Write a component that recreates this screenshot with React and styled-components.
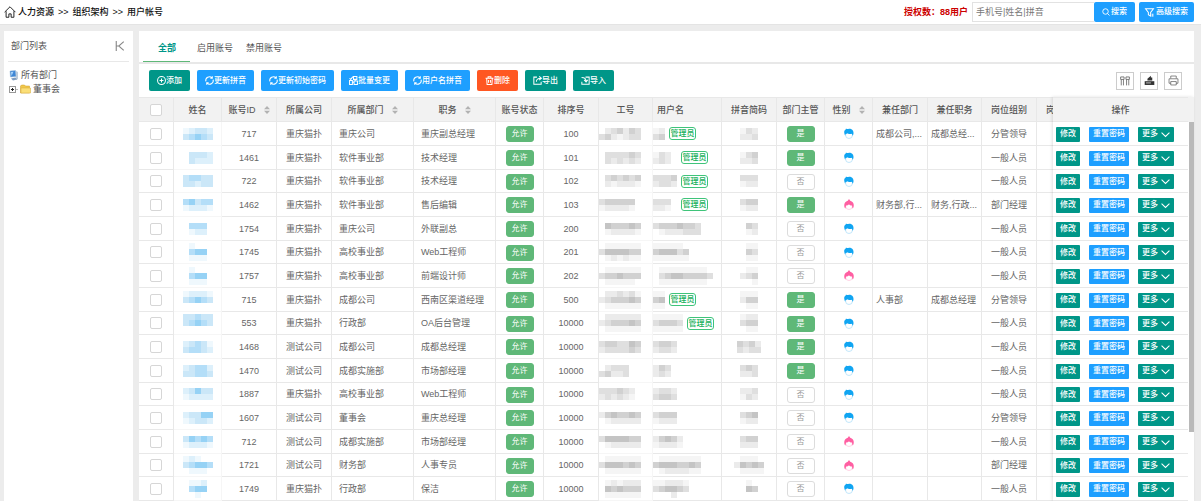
import React from 'react';
import styled, { createGlobalStyle, css } from 'styled-components';

const GlobalStyle = createGlobalStyle`
    * {
        box-sizing: border-box;
    }

    body {
        margin: 0;
        background: #ececec;
        color: #555;
        font-family: 'Liberation Sans', 'Noto Sans CJK SC', sans-serif;
        font-size: 9px;
        line-height: 12px;
    }

    button, input {
        font-family: inherit;
    }
`;

const colors = {
    teal: '#009688',
    blue: '#1e9fff',
    red: '#ff5722',
    green: '#5fb878',
    line: '#e8e8e8',
};

const Page = styled.div`
    display: flex;
    flex-direction: column;
    min-height: 100vh;
    overflow: hidden;
`;

/* ---------- top bar ---------- */

const TopBar = styled.header`
    display: flex;
    align-items: center;
    justify-content: space-between;
    height: 25px;
    padding: 0 7px 0 4px;
    background: #fff;
    border-bottom: 1px solid #e4e4e4;
`;

const Breadcrumb = styled.nav`
    display: flex;
    align-items: center;
    gap: 4px;
    color: #111;
    font-size: 9px;
    font-weight: 500;
`;

const BreadcrumbHome = styled.span`
    display: flex;
    align-items: center;
    gap: 2px;
`;

const SearchForm = styled.form`
    display: flex;
    align-items: center;
`;

const License = styled.strong`
    margin-right: 4px;
    color: #c00;
`;

const SearchInput = styled.input`
    width: 122px;
    height: 20px;
    padding: 0 3px;
    border: 1px solid #e2e2e2;
    border-right: 0;
    border-radius: 0;
    color: #555;
    font-size: 9px;

    &::placeholder {
        color: #777;
    }
`;

const Button = styled.button`
    display: inline-flex;
    align-items: center;
    justify-content: center;
    height: ${props => props.$height || 21}px;
    padding: 0 ${props => (props.$compact ? 4 : 8)}px;
    gap: ${props => props.$gap || 0}px;
    border: 0;
    border-radius: ${props => (props.$compact ? 1 : 2)}px;
    background: ${props => colors[props.$color]};
    color: #fff;
    font-size: 8px;
    font-weight: 500;
    line-height: 12px;
    white-space: nowrap;
    cursor: pointer;
`;

const AdvancedButton = styled(Button)`
    margin-left: 4px;
    padding: 0 6px;
`;

/* ---------- layout ---------- */

const Body = styled.div`
    display: flex;
    flex: 1;
    gap: 6px;
    padding: 6px 7px 0 4px;
`;

const Sidebar = styled.aside`
    flex: none;
    width: 129px;
    padding: 0 4px;
    background: #fff;
`;

const SidebarHead = styled.div`
    display: flex;
    align-items: center;
    justify-content: space-between;
    height: 31px;
    padding: 0 4px 0 3px;
    border-bottom: 1px solid ${colors.line};
`;

const IconButton = styled.button`
    display: flex;
    padding: 0;
    border: 0;
    background: none;
    color: #888;
    cursor: pointer;
`;

const Tree = styled.ul`
    margin: 0;
    padding: 6px 0 0 1px;
    list-style: none;
`;

const TreeItem = styled.li`
    display: flex;
    align-items: center;
    height: 14px;
    gap: 2px;
`;

const Main = styled.main`
    display: flex;
    flex-direction: column;
    flex: 1;
    min-width: 0;
    background: #fff;
`;

const Tabs = styled.div`
    display: flex;
    height: 33px;
    padding-left: 4px;
    border-bottom: 2px solid ${colors.line};
`;

const Tab = styled.button`
    height: 31px;
    padding: 2px 6px 0 7px;
    border: 0;
    background: none;
    color: #555;
    font-size: 9px;
    cursor: pointer;

    ${props => props.$active && css`
        padding: 2px 14px 0 15px;
        border-bottom: 1px solid ${colors.green};
        color: ${colors.teal};
        font-weight: bold;
    `}
`;

const Toolbar = styled.div`
    display: flex;
    align-items: center;
    justify-content: space-between;
    padding: 6px 12px 6px 10px;
`;

const ToolGroup = styled.div`
    display: flex;
    gap: ${props => props.$gap || 6}px;
`;

const ToolButton = styled.button`
    display: flex;
    align-items: center;
    justify-content: center;
    width: 18px;
    height: 18px;
    padding: 0;
    border: 1px solid #ccc;
    background: #fff;
    color: #555;
    cursor: pointer;
`;

/* ---------- table ---------- */

const TableView = styled.div`
    display: flex;
`;

const Scroller = styled.div`
    flex: 1;
    min-width: 0;
    overflow: hidden;
`;

const Table = styled.table`
    width: ${props => props.$width}px;
    min-width: 100%;
    table-layout: fixed;
    border-collapse: separate;
    border-spacing: 0;

    tbody tr:nth-child(3n) td {
        height: 23px;
    }
`;

const Th = styled.th`
    height: 25px;
    padding: 0 ${props => (props.$align === 'left' ? 4 : 0)}px;
    background: #f2f2f2;
    border: solid ${colors.line};
    border-width: 1px 1px 1px 0;
    color: #555;
    font-weight: 500;
    text-align: ${props => props.$align || 'center'};
    white-space: nowrap;
    overflow: hidden;
`;

const Td = styled.td`
    height: 24px;
    padding: 0 ${props => props.$pad || 0}px;
    border: solid ${colors.line};
    border-width: 0 1px 1px 0;
    color: #666;
    text-align: ${props => props.$align || 'center'};
    white-space: nowrap;
    overflow: hidden;
`;

const MaskedTd = styled(Td)`
    border-color: #f6f6f6;
`;

const SortLabel = styled.span`
    display: inline-flex;
    align-items: center;
    gap: 8px;
`;

const Checkbox = styled.input.attrs({ type: 'checkbox' })`
    display: block;
    width: 12px;
    height: 12px;
    margin: 0 auto;
    appearance: none;
    border: 1px solid #d6d6d6;
    border-radius: 2px;
    background: #fff;
`;

const Status = styled.button`
    display: block;
    width: 28px;
    height: 16px;
    margin: 1px auto 0;
    padding: 0;
    border: 1px solid ${props => (props.$on ? colors.green : '#dcdcdc')};
    border-radius: 3px;
    background: ${props => (props.$on ? colors.green : '#fff')};
    color: ${props => (props.$on ? '#fff' : '#999')};
    font-size: 8px;
    line-height: 14px;
    cursor: pointer;
`;

const UserCell = styled.div`
    display: flex;
    align-items: center;
    gap: 4px;
`;

const AdminTag = styled.span`
    width: 27px;
    height: 13px;
    border: 1px solid #3fc47a;
    border-radius: 3px;
    color: #16b05a;
    font-size: 8px;
    font-weight: 500;
    line-height: 11px;
    text-align: center;
`;

const FixedPane = styled.div`
    display: flex;
    flex: none;
    width: 141px;
    background: #fff;
    box-shadow: -1px 0 3px rgba(0, 0, 0, 0.12);
`;

const FixedTable = styled(Table)`
    min-width: 0;

    th, td {
        border-right: 0;
    }
`;

const Actions = styled.div`
    display: flex;
    gap: 9px;
    padding: 1px 0 0 3px;
`;

const Rail = styled.div`
    width: 6px;
    border-top: 25px solid #f2f2f2;
`;

const Thumb = styled.div`
    width: 5px;
    height: 310px;
    margin-left: 1px;
    background: #b9b9b9;
`;

const Svg = styled.svg`
    display: block;
    flex: none;
    margin: ${props => (props.$center ? '0 auto' : 0)};
    overflow: visible;
`;

/* ---------- icons ---------- */

const strokes = {
    add: 'M8 1a7 7 0 1 0 0 14a7 7 0 0 0 0-14M8 4.500v7M4.500 8h7',
    refresh: 'M1.500 9.500A6.500 6.500 0 0 1 12.500 3.500M14.500 6.500A6.500 6.500 0 0 1 3.500 12.500M13 .5v3.500H9.500M3 15.500v-3.500h3.500',
    batch: 'M1 8h5v7H1zM9 9h6v6H9zM8 1h6v5H8zM1 4l2 2 4-5M6 11h3M11 6v3',
    trash: 'M1 4h14M5.500 4V1.500h5V4M3 4l.7 11h8.600L13 4M6.300 7v5M9.700 7v5',
    export: 'M7 2H1.500v12.500h13V10M6 10c0-4 3-6 8-6M11 .5l4 3.500-4 3.500',
    import: 'M8 2h6.500v12.500h-13V10M1 2.500c5 0 8 2 8 7M5.500 7L9 10.500 12 7',
    search: 'M7 1.500a5.500 5.500 0 1 0 0 11a5.500 5.500 0 0 0 0-11M11 11l4 4',
    filter: 'M1 1.500h14L10 8v6.500L6 12V8zM12 11h3M12 14h3',
    down: 'M1 4.500l7 7 7-7',
    collapse: 'M2 0v16M14 1L6 8l8 7M2 8h4',
    home: 'M.8 8.200L8 1l7.200 7.200M2.800 7v8h3.700v-4.500h3V15h3.700V7',
    columns: 'M1 1.500h5.500v4H1zM9.500 1.500H15v4H9.500zM2 6v9M5.500 6v9M10.500 6v9M14 6v9',
    print: 'M4 5V1.500h8V5M4 12H1.500V5.500h13V12H12M4 9.500h8v5H4z',
};

const Icon = ({ name, size = 9, weight = 1.8 }) => (
    <Svg width={size} height={size} viewBox="0 0 16 16" fill="none" stroke="currentColor" strokeWidth={weight} aria-hidden="true">
        <path d={strokes[name]} />
    </Svg>
);

const ExportIcon = () => (
    <Svg width="11" height="11" viewBox="0 0 16 16" fill="#333" aria-hidden="true">
        <path d="M1 9h14v5.500H1z" />
        <path d="M5 8V5.500L10 1v2.500h2V8z" />
        <path d="M3 11.500h7" stroke="#fff" />
    </Svg>
);

const SortIcon = () => (
    <Svg width="6" height="8" viewBox="0 0 6 8" fill="#b2b2b2" aria-hidden="true">
        <path d="M3 0l3 3.300H0zM3 8l3-3.300H0z" />
    </Svg>
);

const ComputerIcon = () => (
    <Svg width="10" height="11" viewBox="0 0 20 22" aria-hidden="true">
        <path d="M2 2l11-1 1 12-11 1z" fill="#3d86d6" stroke="#9bb8d3" />
        <path d="M4 4l5-.5L5 12z" fill="#a9d5fb" />
        <path d="M14 2l4 2v14l-4 2z" fill="#bccbdb" />
        <path d="M4 17l9-2 3 4-8 2z" fill="#7f9dc0" />
    </Svg>
);

const FolderIcon = () => (
    <Svg width="11" height="10" viewBox="0 0 22 20" aria-hidden="true">
        <path d="M1 4l2-2h6l2 2h8v14H1z" fill="#f1c84b" stroke="#cf9d2b" />
        <path d="M2 8h19v10H2z" fill="#fbdf78" stroke="#d7aa38" />
    </Svg>
);

const ExpandIcon = () => (
    <Svg width="9" height="7" viewBox="0 0 9 7" fill="none" shapeRendering="crispEdges" aria-hidden="true">
        <path d="M.5.5h6v6h-6z" stroke="#999" />
        <path d="M2 3.500h3M3.500 2v3" stroke="#222" />
        <path d="M7 3.500h2" stroke="#bbb" />
    </Svg>
);

const Gender = ({ female }) => (
    <Svg $center width="10" height="11" viewBox="0 0 20 22" role="img" aria-label={female ? '女' : '男'}>
        <path d="M3 10v4a7 7 0 0 0 14 0v-4z" fill="#fff" stroke={female ? '#ffc0da' : '#a9dcf8'} strokeWidth="1.400" />
        {female ? (
            <path d="M10 0l2.500 3.500C17 4.500 20 9 19.500 13c0 3-1 5-2.500 6l-1-6c-3 0-5-1-6-2.500C8.500 12 6.500 13 4 13l-1 6C1.500 18 .5 16 .5 13 0 9 3 4.500 7.500 3.500z" fill="#ff5fa2" />
        ) : (
            <path d="M1 12C-.5 7 1 4 3 3.500L4 1c2 1.500 4 1 6 .5 6-.5 9.500 4 9 9.500 0 2-.8 3.500-2 4.500l-1-4c-4 .8-8 .3-10-1.500-.5 1.500-1 2.500-3.500 2.500v3C2 14.500 1.300 13.500 1 12z" fill="#10a5f2" />
        )}
    </Svg>
);

/* Masked values: every digit is the shade of one 6px block, "/" starts a new line */
const shades = {
    blue: ['none', '#eff8fd', '#ddf0fb', '#cbe7f8', '#b4def8', '#96d2f5'],
    gray: ['none', '#f5f5f5', '#ebebeb', '#dfdfdf', '#d1d1d1', '#c4c4c4'],
};

const Mosaic = ({ code, tone = 'gray', center }) => {
    const lines = code.split('/');

    return (
        <Svg $center={center} width={lines[0].length * 6} height={lines.length * 6} shapeRendering="crispEdges" aria-hidden="true">
            {lines.map((line, y) => line.split('').map((shade, x) => (
                <rect key={`${x}-${y}`} x={x * 6} y={y * 6} width="6" height="6" fill={shades[tone][shade]} />
            )))}
        </Svg>
    );
};

/* ---------- data ---------- */

const columns = [
    { title: '姓名', width: 48 },
    { title: '账号ID', width: 55, sort: true },
    { title: '所属公司', width: 55 },
    { title: '所属部门', width: 82, sort: true },
    { title: '职务', width: 82, sort: true },
    { title: '账号状态', width: 48 },
    { title: '排序号', width: 55 },
    { title: '工号', width: 54 },
    { title: '用户名', width: 69, align: 'left' },
    { title: '拼音简码', width: 55 },
    { title: '部门主管', width: 48 },
    { title: '性别', width: 48, sort: true },
    { title: '兼任部门', width: 55 },
    { title: '兼任职务', width: 54 },
    { title: '岗位组别', width: 55 },
    { title: '岗位级别', width: 55 },
];

const tableWidth = columns.reduce((sum, column) => sum + column.width, 35);

// id, company, department, job, order, lead, female, group, masks [name, number, user, pinyin], admin, extra department, extra job
const users = [
    [717, '重庆猫扑', '重庆公司', '重庆副总经理', 100, 1, 0, '分管领导', ['12332/34543', '0234243/3421233', '12/34', '132/223'], 1, '成都公司,...', '成都总经...'],
    [1461, '重庆猫扑', '软件事业部', '技术经理', 101, 1, 0, '一般人员', ['03332/03222', '0333343/0323232', '1320/2320', '134/223'], 1],
    [722, '重庆猫扑', '软件事业部', '技术经理', 102, 0, 0, '一般人员', ['34433/33233', '0343434/0212221', '3334/2332', '333/122'], 1],
    [1462, '重庆猫扑', '软件事业部', '售后编辑', 103, 1, 1, '部门经理', ['45344/12221', '3444440/1222210', '3330/2210', '344/122'], 1, '财务部,行...', '财务,行政...'],
    [1754, '重庆猫扑', '重庆公司', '外联副总', 200, 0, 0, '一般人员', ['04440/01220', '0544454/0122221', '34445443/01222333', '043/012']],
    [1745, '重庆猫扑', '高校事业部', 'Web工程师', 201, 0, 0, '一般人员', ['01000/04550/01110', '0111111/3555544/0121211', '111110/455534/111111', '011/043/011']],
    [1757, '重庆猫扑', '高校事业部', '前端设计师', 202, 0, 1, '一般人员', ['01000/04550/01110', '0111111/3445444/0111110', '0111111110/0345544443/0111111110', '011/234/001']],
    [715, '重庆猫扑', '成都公司', '西南区渠道经理', 500, 1, 0, '分管领导', ['12221/34543/00000', '0223231/2344454/0111111', '11/45/11', '111/244/011'], 1, '人事部', '成都总经理'],
    [553, '重庆猫扑', '行政部', 'OA后台管理', 10000, 1, 0, '一般人员', ['33433/34543/00000', '0222222/2344454/0111111', '11111/34443/11111', '122/344/011'], 1],
    [1468, '测试公司', '成都公司', '成都总经理', 10000, 1, 0, '一般人员', ['23431/34432', '3443354/2333343', '3443/2332', '4342/3233']],
    [1470, '测试公司', '成都实施部', '市场部经理', 10000, 1, 0, '一般人员', ['23442/33443', '0233300/3422300', '243/232', '343/223']],
    [1887, '重庆猫扑', '高校事业部', 'Web工程师', 10000, 0, 0, '一般人员', ['23533/12222', '3334320/2323210', '2332/3443', '223/132']],
    [1607, '测试公司', '董事会', '重庆总经理', 10000, 0, 0, '分管领导', ['23355/12332', '2454454/0122222', '3444/1222', '345/122']],
    [712, '测试公司', '成都实施部', '市场部经理', 10000, 0, 1, '一般人员', ['35454/12221', '3555544/0122222', '24542/12221', '344/222']],
    [1721, '测试公司', '财务部', '人事专员', 10000, 0, 1, '部门经理', ['12100/34554/01110', '0111111/3555454/0111111', '01111111/45554454/01222211', '01110/25454/01111']],
    [1749, '重庆猫扑', '行政部', '保洁', 10000, 0, 0, '一般人员', ['01120/04550/00100', '0121222/0545444/0111111', '112221/345543/000200', '010/054/000']],
];

const actions = [
    ['add', '添加', 'teal'],
    ['refresh', '更新拼音', 'blue'],
    ['refresh', '更新初始密码', 'blue'],
    ['batch', '批量变更', 'blue'],
    ['refresh', '用户名拼音', 'blue'],
    ['trash', '删除', 'red'],
    ['export', '导出', 'teal'],
    ['import', '导入', 'teal'],
];

/* ---------- components ---------- */

const UserRow = ({ user }) => {
    const [id, company, department, job, order, lead, female, group, masks, admin, extraDepartment, extraJob] = user;

    return (
        <tr>
            <Td><Checkbox aria-label={`选择 ${id}`} /></Td>
            <MaskedTd><Mosaic code={masks[0]} tone="blue" center /></MaskedTd>
            <Td>{id}</Td>
            <Td>{company}</Td>
            <Td $align="left" $pad={7}>{department}</Td>
            <Td $align="left" $pad={7}>{job}</Td>
            <Td><Status type="button" $on>允许</Status></Td>
            <Td>{order}</Td>
            <MaskedTd><Mosaic code={masks[1]} /></MaskedTd>
            <Td>
                <UserCell>
                    <Mosaic code={masks[2]} />
                    {admin && <AdminTag>管理员</AdminTag>}
                </UserCell>
            </Td>
            <Td><Mosaic code={masks[3]} center /></Td>
            <Td><Status type="button" $on={!!lead}>{lead ? '是' : '否'}</Status></Td>
            <Td><Gender female={!!female} /></Td>
            <Td $align="left" $pad={3}>{extraDepartment}</Td>
            <Td $align="left" $pad={3}>{extraJob}</Td>
            <Td>{group}</Td>
            <Td />
        </tr>
    );
};

const UserTable = () => (
    <TableView>
        <Scroller>
            <Table $width={tableWidth}>
                <colgroup>
                    <col width="35" />
                    {columns.map(column => <col key={column.title} width={column.width} />)}
                </colgroup>
                <thead>
                    <tr>
                        <Th><Checkbox aria-label="全选" /></Th>
                        {columns.map(({ title, align, sort }) => (
                            <Th key={title} $align={align}>
                                {sort ? <SortLabel>{title}<SortIcon /></SortLabel> : title}
                            </Th>
                        ))}
                    </tr>
                </thead>
                <tbody>
                    {users.map(user => <UserRow key={user[0]} user={user} />)}
                </tbody>
            </Table>
        </Scroller>
        <FixedPane>
            <FixedTable $width={135}>
                <thead>
                    <tr><Th>操作</Th></tr>
                </thead>
                <tbody>
                    {users.map(user => (
                        <tr key={user[0]}>
                            <Td>
                                <Actions>
                                    <Button type="button" $color="teal" $height={15} $compact>修改</Button>
                                    <Button type="button" $color="blue" $height={15} $compact>重置密码</Button>
                                    <Button type="button" $color="teal" $height={15} $gap={3} $compact>
                                        更多<Icon name="down" />
                                    </Button>
                                </Actions>
                            </Td>
                        </tr>
                    ))}
                </tbody>
            </FixedTable>
            <Rail><Thumb /></Rail>
        </FixedPane>
    </TableView>
);

const App = () => (
    <Page>
        <GlobalStyle />
        <TopBar>
            <Breadcrumb>
                <BreadcrumbHome>
                    <Icon name="home" size={12} weight={1.2} />
                    人力资源
                </BreadcrumbHome>
                <span>&gt;&gt;</span>
                <span>组织架构</span>
                <span>&gt;&gt;</span>
                <span>用户帐号</span>
            </Breadcrumb>
            <SearchForm>
                <License>授权数：88用户</License>
                <SearchInput type="text" placeholder="手机号|姓名|拼音" aria-label="搜索用户" />
                <Button type="button" $color="blue" $height={20} $gap={1}>
                    <Icon name="search" size={8} />搜索
                </Button>
                <AdvancedButton type="button" $color="blue" $height={20} $gap={2}>
                    <Icon name="filter" />高级搜索
                </AdvancedButton>
            </SearchForm>
        </TopBar>
        <Body>
            <Sidebar>
                <SidebarHead>
                    <span>部门列表</span>
                    <IconButton type="button" aria-label="收起"><Icon name="collapse" size={10} /></IconButton>
                </SidebarHead>
                <Tree>
                    <TreeItem><ComputerIcon />所有部门</TreeItem>
                    <TreeItem><ExpandIcon /><FolderIcon />董事会</TreeItem>
                </Tree>
            </Sidebar>
            <Main>
                <Tabs>
                    <Tab type="button" $active>全部</Tab>
                    <Tab type="button">启用账号</Tab>
                    <Tab type="button">禁用账号</Tab>
                </Tabs>
                <Toolbar>
                    <ToolGroup $gap={7}>
                        {actions.map(([icon, title, color]) => (
                            <Button key={title} type="button" $color={color}>
                                <Icon name={icon} />{title}
                            </Button>
                        ))}
                    </ToolGroup>
                    <ToolGroup>
                        <ToolButton type="button" aria-label="筛选列"><Icon name="columns" size={10} weight={1.2} /></ToolButton>
                        <ToolButton type="button" aria-label="导出"><ExportIcon /></ToolButton>
                        <ToolButton type="button" aria-label="打印"><Icon name="print" size={11} weight={1} /></ToolButton>
                    </ToolGroup>
                </Toolbar>
                <UserTable />
            </Main>
        </Body>
    </Page>
);

export default App;
